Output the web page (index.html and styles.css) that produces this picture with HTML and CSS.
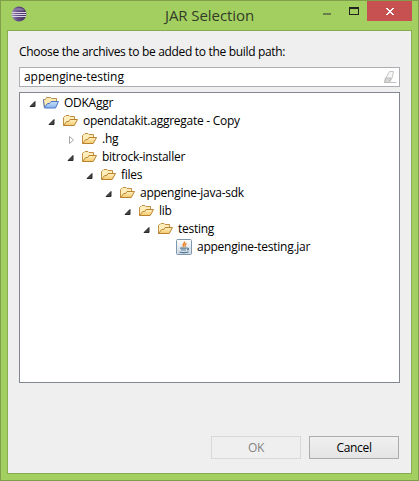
FILE: index.html
```html
<!DOCTYPE html>
<html lang="en">
<head>
<meta charset="utf-8">
<title>JAR Selection</title>
<link rel="stylesheet" href="styles.css">
</head>
<body>
<svg class="defs" width="0" height="0" aria-hidden="true">
  <defs>
    <linearGradient id="gold" x1="0" y1="0" x2="0" y2="1"><stop offset="0" stop-color="#fff0c0"/><stop offset="1" stop-color="#f4c96c"/></linearGradient>
    <linearGradient id="blue" x1="0" y1="0" x2="0" y2="1"><stop offset="0" stop-color="#dcebfb"/><stop offset="1" stop-color="#86b4ee"/></linearGradient>
    <linearGradient id="orb" x1="0" y1="0" x2="1" y2="0"><stop offset="0" stop-color="#a393b8"/><stop offset=".35" stop-color="#68528a"/><stop offset="1" stop-color="#443060"/></linearGradient>
    <linearGradient id="tile" x1="0" y1="0" x2="0" y2="1"><stop offset="0" stop-color="#fff"/><stop offset="1" stop-color="#ccd8e2"/></linearGradient>
  </defs>
  <symbol id="open" viewBox="0 0 8 8"><path d="M6 1.5V6.5H1z" fill="#444" stroke="#2a2a2a" stroke-width="1" stroke-linejoin="round"/></symbol>
  <symbol id="closed" viewBox="0 0 8 8"><path d="M2.5.5v7l4-3.5z" fill="#fff" stroke="#a5a5a5"/></symbol>
  <symbol id="folder" viewBox="0 0 16 16"><path d="M1.5 12.5v-8l1-1H3l1-1h3l1 1h4.5v3" fill="#ffedba" stroke="#c28f42"/><path d="M1.5 12.5l3.2-4h2L8 6.5h7.5l-3.3 6z" fill="url(#gold)" stroke="#b9822f"/></symbol>
  <symbol id="project" viewBox="0 0 16 16"><path d="M1.5 12.5l-1-8h2l1-2h4l1 1h5v3" fill="#ffe9b0" stroke="#b09055"/><path d="M.5 4.5l1 8.5h11l3-6.5H8L6.5 8.5h-2l-3 4" fill="url(#blue)" stroke="#4a74c4"/><path d="M1.2 5h1.6l1-1.5h3l1 1h5V6H7.6L6 8H4l-2 2.5z" fill="#ffe9b0"/></symbol>
  <symbol id="jar" viewBox="0 0 16 16"><rect x=".5" y=".5" width="15" height="15" rx="1" fill="url(#tile)" stroke="#7f98ad"/><path d="M8.5 2.5c.8 2-3 2.4-1 5.5M10.5 4.5c-2 .8-2 1.5-1 3.5" fill="none" stroke="#ed8424" stroke-width="1.4"/><path d="M4 9.2h6.8M5 11h5M3.5 13c2 1 7 1 9-.3M11 9.3c2-.6 2 1.2.2 1.8" fill="none" stroke="#527894" stroke-width="1.2"/></symbol>
</svg>
<div class="window">
  <header class="titlebar">
    <svg class="logo" viewBox="0 0 16 16"><circle cx="8" cy="8" r="7.4" fill="url(#orb)"/><path d="M2.5 4.5C5 1 11 1 13.5 4.5z" fill="#8d79a8"/><path d="M1 6.5h14M.7 8.5h14.6M1 10.5h14" stroke="#d9d0e4" stroke-width="1"/></svg>
    <h1 class="title">JAR Selection</h1>
    <div class="controls"><i class="min"></i><i class="max"></i><b class="close"><svg viewBox="0 0 8 7"><path d="M0 0h2v1h1v1h2V1h1V0h2v1H7v1H6v1H5v1h1v1h1v1h1v1H6V6H5V5H3v1H2v1H0V6h1V5h1V4h1V3H2V2H1V1H0z" fill="#fff"/></svg></b></div>
  </header>
  <main class="content">
    <p class="prompt">Choose the archives to be added to the build path:</p>
    <div class="field"><span class="query">appengine-testing</span><svg class="eraser" viewBox="0 0 14 13"><path d="M6.5.5h4L9 7l-2.500 4.500h-5l1-4z" fill="#f6f6f6" stroke="#c4c4c4"/><path d="M2.500 7h5.500l-2 4.500H1.500z" fill="#d6d6d6" stroke="#bbb"/><path d="M7 11.500h6.500" stroke="#c0c0c0"/></svg></div>
    <div class="tree">
      <div class="row"><svg class="arrow"><use href="#open"/></svg><svg class="icon"><use href="#project"/></svg><span>ODKAggr</span></div>
      <div class="row l1"><svg class="arrow"><use href="#open"/></svg><svg class="icon"><use href="#folder"/></svg><span>opendatakit.aggregate - Copy</span></div>
      <div class="row l2"><svg class="arrow"><use href="#closed"/></svg><svg class="icon"><use href="#folder"/></svg><span>.hg</span></div>
      <div class="row l2"><svg class="arrow"><use href="#open"/></svg><svg class="icon"><use href="#folder"/></svg><span>bitrock-installer</span></div>
      <div class="row l3"><svg class="arrow"><use href="#open"/></svg><svg class="icon"><use href="#folder"/></svg><span>files</span></div>
      <div class="row l4"><svg class="arrow"><use href="#open"/></svg><svg class="icon"><use href="#folder"/></svg><span>appengine-java-sdk</span></div>
      <div class="row l5"><svg class="arrow"><use href="#open"/></svg><svg class="icon"><use href="#folder"/></svg><span>lib</span></div>
      <div class="row l6"><svg class="arrow"><use href="#open"/></svg><svg class="icon"><use href="#folder"/></svg><span>testing</span></div>
      <div class="row l7"><svg class="arrow"></svg><svg class="icon"><use href="#jar"/></svg><span>appengine-testing.jar</span></div>
    </div>
    <footer class="buttons"><button class="btn" disabled>OK</button><button class="btn cancel">Cancel</button></footer>
  </main>
</div>
</body>
</html>
```
FILE: styles.css
```css
* { box-sizing: border-box; }
body { margin: 0; font: 12px/18px "Open Sans", "Noto Sans", sans-serif; color: #000; letter-spacing: -0.32px; white-space: nowrap; }
.defs { position: absolute; }
.window { width: 419px; height: 481px; border: 1px solid #7f9f4b; background: #a2cf5f; padding: 0 6px 6px; overflow: hidden; }
.titlebar { display: flex; height: 29px; align-items: flex-start; }
.logo { width: 16px; height: 16px; margin: 5px 0 0 4px; }
.title { flex: 1; margin: 4px 0 0 138px; font-size: 15px; line-height: 20px; font-weight: 400; letter-spacing: -0.08px; color: #333b29; }
.controls { display: flex; }
.min { width: 8px; height: 2px; background: #697e48; margin: 12px 18px 0 0; }
.max { width: 10px; height: 8px; border: 1px solid #222; border-top-width: 2px; margin: 6px 8px 0 0; }
.close { width: 45px; height: 20px; background: #c75050; display: flex; align-items: center; justify-content: center; }
.close svg { width: 8px; height: 7px; margin-top: 1px; }
.content { width: 405px; height: 444px; border: 1px solid #87ad4f; background: #efefef; padding: 12px 11px; }
.prompt { margin: 0 0 6px; }
.field { width: 381px; height: 20px; border: 1px solid #abadb3; background: #fff; display: flex; justify-content: space-between; align-items: center; padding: 0 2px 0 4px; }
.query { letter-spacing: -0.06px; }
.eraser { width: 14px; height: 13px; }
.tree { width: 381px; height: 291px; margin-top: 5px; border: 1px solid #828790; background: #fff; padding: 1px 0 0 9px; letter-spacing: -0.26px; }
.row { display: flex; height: 18px; align-items: center; }
.arrow { width: 8px; height: 8px; margin: 1px 6px 0 0; }
.icon { width: 16px; height: 16px; margin-right: 5px; }
.l1 { padding-left: 19px; }
.l2 { padding-left: 38px; }
.l3 { padding-left: 57px; }
.l4 { padding-left: 76px; }
.l5 { padding-left: 95px; }
.l6 { padding-left: 114px; }
.l7 { padding-left: 133px; }
.buttons { display: flex; gap: 8px; justify-content: flex-end; margin: 53px 1px 0 0; }
.btn { width: 90px; height: 23px; padding: 0; font: inherit; letter-spacing: inherit; line-height: 20px; border: 1px solid #acacac; background: linear-gradient(#f0f0f0, #e4e4e4); color: #000; }
.btn:disabled { border-color: #d9d9d9; background: #efefef; color: #838383; }
```
